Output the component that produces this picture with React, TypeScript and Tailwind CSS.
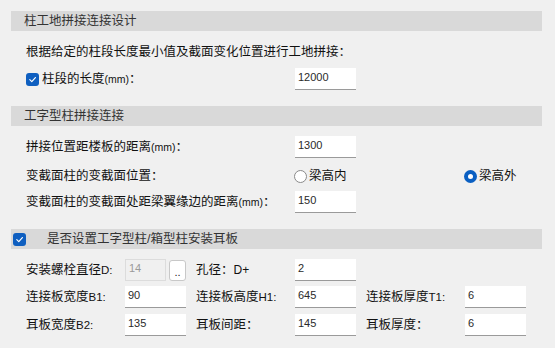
import type { ReactNode } from 'react'

const FONT = { fontFamily: '"Liberation Sans", "Noto Sans CJK SC", sans-serif' }

function CheckBox() {
  return (
    <span className="flex h-[13px] w-[13px] shrink-0 items-center justify-center rounded-[3px] bg-[#0f5fc0]">
      <svg width="9" height="9" viewBox="0 0 10 10" fill="none">
        <path d="M2 5.2 L4.2 7.3 L8.2 2.8" stroke="white" strokeWidth="1.3" strokeLinecap="round" strokeLinejoin="round" />
      </svg>
    </span>
  )
}

function Radio({ checked, label }: { checked?: boolean; label: string }) {
  return (
    <div className="flex items-center gap-[2px]">
      {checked ? (
        <span className="flex h-[13px] w-[13px] items-center justify-center rounded-full bg-[#0a5fc2]">
          <span className="h-[5px] w-[5px] rounded-full bg-white" />
        </span>
      ) : (
        <span className="h-[13px] w-[13px] rounded-full border border-[#8a8a8a] bg-white" />
      )}
      <span className="text-[12.5px] text-[#111]">{label}</span>
    </div>
  )
}

function Field({ value, w = 'w-[61px]' }: { value: string; w?: string }) {
  return (
    <div className={`flex h-[22px] ${w} items-start border-b border-[#9a9a9a] bg-white pl-[3px] pt-[3px] text-[11px] leading-[13px] text-[#2a2a2a]`}>
      {value}
    </div>
  )
}

function Header({ children, check }: { children: ReactNode; check?: boolean }) {
  return (
    <div className="flex h-[20px] w-[531px] items-center bg-[#d9d9d9] text-[12.5px] text-[#333]">
      {check ? (
        <>
          <span className="ml-[2px]">
            <CheckBox />
          </span>
          <span className="ml-[21px]">{children}</span>
        </>
      ) : (
        <span className="ml-[13px]">{children}</span>
      )}
    </div>
  )
}

const Mm = () => <span className="text-[10.5px]">(mm)</span>

function Label({ children }: { children: ReactNode }) {
  return <span className="block text-[12.5px] leading-[20px] text-[#111]">{children}</span>
}

export default function App() {
  return (
    <div className="flex h-[348px] w-[555px] flex-col bg-[#f0f0f0] pl-[11px] pt-[11px] leading-[20px]" style={FONT}>
      <Header>柱工地拼接连接设计</Header>
      <div className="mt-[11px] pl-[15px]">
        <Label>根据给定的柱段长度最小值及截面变化位置进行工地拼接：</Label>
      </div>
      <div className="mt-[6px] grid grid-cols-[269px_61px] items-center pl-[15px]">
        <div className="flex items-center gap-[3px]">
          <CheckBox />
          <Label>
            柱段的长度<Mm />：
          </Label>
        </div>
        <Field value="12000" />
      </div>

      <div className="mt-[16px]">
        <Header>工字型柱拼接连接</Header>
      </div>
      <div className="mt-[10px] grid grid-cols-[269px_61px] items-center pl-[15px]">
        <Label>
          拼接位置距楼板的距离<Mm />：
        </Label>
        <Field value="1300" />
      </div>
      <div className="mt-[8px] grid h-[20px] grid-cols-[268px_170px_auto] items-center pl-[15px]">
        <Label>变截面柱的变截面位置：</Label>
        <Radio label="梁高内" />
        <Radio checked label="梁高外" />
      </div>
      <div className="mt-[5px] grid grid-cols-[269px_61px] items-center pl-[15px]">
        <Label>
          变截面柱的变截面处距梁翼缘边的距离<Mm />：
        </Label>
        <Field value="150" />
      </div>

      <div className="mt-[16px]">
        <Header check>是否设置工字型柱/箱型柱安装耳板</Header>
      </div>
      <div className="mt-[10px] grid grid-cols-[99px_61px_10px_99px_61px_10px_99px_61px] grid-rows-[22px_22px_23px] items-center gap-y-[5px] pl-[15px]">
        <Label>
          安装螺栓直径<span className="text-[11.5px]">D:</span>
        </Label>
        <div className="flex items-center gap-[3px]">
          <div className="flex h-[22px] w-[41px] items-start border border-[#dcdcdc] bg-[#f0f0f0] pl-[3px] pt-[2px] text-[11px] leading-[13px] text-[#9a9a9a]">
            14
          </div>
          <div className="flex h-[21px] w-[17px] items-end justify-center rounded-[3px] border border-[#c8c8c8] bg-white pb-[2px] text-[11px] leading-[11px] text-[#222]">
            ..
          </div>
        </div>
        <span />
        <Label>
          孔径：<span className="text-[12px]">D+</span>
        </Label>
        <Field value="2" />
        <span />
        <span />
        <span />

        <Label>
          连接板宽度<span className="text-[11.5px]">B1:</span>
        </Label>
        <Field value="90" />
        <span />
        <Label>
          连接板高度<span className="text-[11.5px]">H1:</span>
        </Label>
        <Field value="645" />
        <span />
        <Label>
          连接板厚度<span className="text-[11.5px]">T1:</span>
        </Label>
        <Field value="6" />

        <Label>
          耳板宽度<span className="text-[11.5px]">B2:</span>
        </Label>
        <Field value="135" />
        <span />
        <Label>耳板间距：</Label>
        <Field value="145" />
        <span />
        <Label>耳板厚度：</Label>
        <Field value="6" />
      </div>
    </div>
  )
}
